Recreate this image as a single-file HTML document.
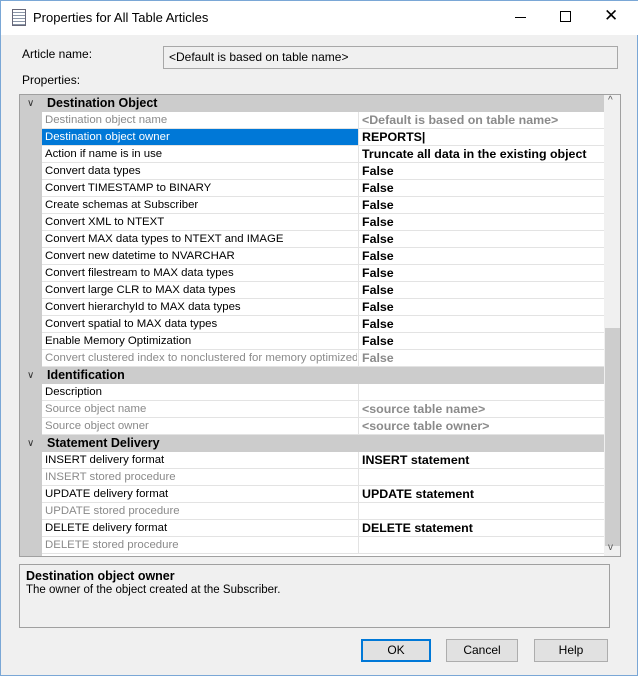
<!DOCTYPE html>
<html><head><style>
*{margin:0;padding:0;box-sizing:border-box}
body{width:638px;height:676px;background:#f0f0f0;font-family:"Liberation Sans",sans-serif;font-size:12px;color:#000;position:relative;overflow:hidden;border:1px solid #7aa7d6}
.title{position:absolute;left:0;top:0;width:638px;height:34px;background:#fff}
.abs{position:absolute}
.grid{position:absolute;left:18px;top:93px;width:602px;height:463px;border:1px solid #a0a0a0;background:#fff;overflow:hidden}
.gut{position:absolute;left:0;top:0;width:22px;height:461px;background:#cccccc}
.row{position:absolute;left:22px;width:562px;height:17px;border-bottom:1px solid #e3e3e3;line-height:17px;white-space:nowrap;overflow:hidden;font-size:11.4px}
.row .n{position:absolute;left:3px;top:0;width:312px;overflow:hidden}
.row .v{position:absolute;left:316px;top:0;height:17px;line-height:16px;border-left:1px solid #e3e3e3;padding-left:3px;font-weight:bold;width:246px;font-size:12.4px}
.g{color:#8a8a8a}
.hdr{position:absolute;left:0;width:584px;height:17px;background:#cccccc;font-weight:bold;font-size:12.5px;line-height:17px}
.hdr span{position:absolute;left:27px}
.hdr i{position:absolute;left:7px;top:0;font-style:normal;font-weight:normal;color:#333;font-size:10px}
.sel{background:#0078d7;color:#fff}
.btn{position:absolute;top:638px;height:23px;background:#e1e1e1;border:1px solid #adadad;text-align:center;line-height:21px}
</style></head><body>
<div class="title"></div>
<div class="abs" style="left:11px;top:8px;width:14px;height:17px;border:1px solid #667;background:repeating-linear-gradient(#fff 0 2px,#8a96a8 2px 3px)"></div>
<div class="abs" style="left:32px;top:9px;font-size:13px">Properties for All Table Articles</div>
<div class="abs" style="left:514px;top:16px;width:11px;height:1px;background:#000"></div>
<div class="abs" style="left:559px;top:10px;width:11px;height:11px;border:1px solid #000"></div>
<div class="abs" style="left:603px;top:5px;font-size:17px">✕</div>
<div class="abs" style="left:21px;top:46px">Article name:</div>
<div class="abs" style="left:162px;top:45px;width:455px;height:23px;border:1px solid #a8a8a8;background:#f0f0f0;padding-left:5px;line-height:21px">&lt;Default is based on table name&gt;</div>
<div class="abs" style="left:21px;top:72px">Properties:</div>
<div class="grid">
<div class="gut"></div>
<div class="hdr" style="top:0"><i>∨</i><span>Destination Object</span></div>
<div class="row" style="top:17px"><span class="n g">Destination object name</span><span class="v g">&lt;Default is based on table name&gt;</span></div>
<div class="row" style="top:34px"><span class="n sel" style="left:0;padding-left:3px;width:316px">Destination object owner</span><span class="v">REPORTS|</span></div>
<div class="row" style="top:51px"><span class="n">Action if name is in use</span><span class="v">Truncate all data in the existing object</span></div>
<div class="row" style="top:68px"><span class="n">Convert data types</span><span class="v">False</span></div>
<div class="row" style="top:85px"><span class="n">Convert TIMESTAMP to BINARY</span><span class="v">False</span></div>
<div class="row" style="top:102px"><span class="n">Create schemas at Subscriber</span><span class="v">False</span></div>
<div class="row" style="top:119px"><span class="n">Convert XML to NTEXT</span><span class="v">False</span></div>
<div class="row" style="top:136px"><span class="n">Convert MAX data types to NTEXT and IMAGE</span><span class="v">False</span></div>
<div class="row" style="top:153px"><span class="n">Convert new datetime to NVARCHAR</span><span class="v">False</span></div>
<div class="row" style="top:170px"><span class="n">Convert filestream to MAX data types</span><span class="v">False</span></div>
<div class="row" style="top:187px"><span class="n">Convert large CLR to MAX data types</span><span class="v">False</span></div>
<div class="row" style="top:204px"><span class="n">Convert hierarchyId to MAX data types</span><span class="v">False</span></div>
<div class="row" style="top:221px"><span class="n">Convert spatial to MAX data types</span><span class="v">False</span></div>
<div class="row" style="top:238px"><span class="n">Enable Memory Optimization</span><span class="v">False</span></div>
<div class="row" style="top:255px"><span class="n g">Convert clustered index to nonclustered for memory optimized table</span><span class="v g">False</span></div>
<div class="hdr" style="top:272px"><i>∨</i><span>Identification</span></div>
<div class="row" style="top:289px"><span class="n">Description</span><span class="v"></span></div>
<div class="row" style="top:306px"><span class="n g">Source object name</span><span class="v g">&lt;source table name&gt;</span></div>
<div class="row" style="top:323px"><span class="n g">Source object owner</span><span class="v g">&lt;source table owner&gt;</span></div>
<div class="hdr" style="top:340px"><i>∨</i><span>Statement Delivery</span></div>
<div class="row" style="top:357px"><span class="n">INSERT delivery format</span><span class="v">INSERT statement</span></div>
<div class="row" style="top:374px"><span class="n g">INSERT stored procedure</span><span class="v"></span></div>
<div class="row" style="top:391px"><span class="n">UPDATE delivery format</span><span class="v">UPDATE statement</span></div>
<div class="row" style="top:408px"><span class="n g">UPDATE stored procedure</span><span class="v"></span></div>
<div class="row" style="top:425px"><span class="n">DELETE delivery format</span><span class="v">DELETE statement</span></div>
<div class="row" style="top:442px"><span class="n g">DELETE stored procedure</span><span class="v"></span></div>
<div class="abs" style="left:584px;top:0;width:17px;height:461px;background:#f0f0f0"></div>
<div class="abs" style="left:585px;top:233px;width:15px;height:218px;background:#cdcdcd"></div>
<div class="abs" style="left:588px;top:0;font-size:10px;color:#555">^</div>
<div class="abs" style="left:588px;top:447px;font-size:10px;color:#555">v</div>
</div>
<div class="abs" style="left:18px;top:563px;width:591px;height:64px;border:1px solid #a0a0a0;background:#f0f0f0;padding:4px 6px">
<div style="font-weight:bold;font-size:12.5px">Destination object owner</div>
<div style="font-size:11.5px;margin-top:1px">The owner of the object created at the Subscriber.</div>
</div>
<div class="btn" style="left:360px;width:70px;border:2px solid #0078d7;line-height:19px">OK</div>
<div class="btn" style="left:445px;width:72px">Cancel</div>
<div class="btn" style="left:533px;width:74px">Help</div>
</body></html>
